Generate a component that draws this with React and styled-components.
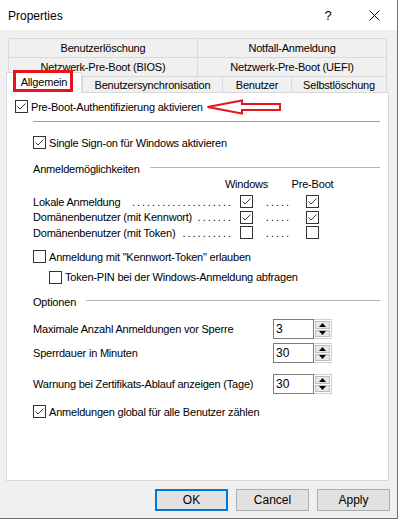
import styled, { createGlobalStyle } from 'styled-components';

const GlobalStyle = createGlobalStyle`
  html, body {
    margin: 0;
    padding: 0;
    background: #ffffff;
  }
  body {
    font-family: "Liberation Sans", Arial, sans-serif;
    font-size: 11px;
    letter-spacing: -0.2px;
    color: #000000;
  }
  * {
    box-sizing: border-box;
  }
`;

const backTabs = [
  ['Benutzerlöschung', 'Notfall-Anmeldung'],
  ['Netzwerk-Pre-Boot (BIOS)', 'Netzwerk-Pre-Boot (UEFI)'],
];

const frontTabs = [
  { label: 'Allgemein', width: 76, selected: true },
  { label: 'Benutzersynchronisation', width: 140 },
  { label: 'Benutzer', width: 69 },
  { label: 'Selbstlöschung', width: 96 },
];

// dots: how many leader dots the row shows before the Windows column
const loginRows = [
  { label: 'Lokale Anmeldung', dots: 20, windows: true, preBoot: true },
  { label: 'Domänenbenutzer (mit Kennwort)', dots: 7, windows: true, preBoot: true },
  { label: 'Domänenbenutzer (mit Token)', dots: 10, windows: false, preBoot: false },
];

const spinRows = [
  { label: 'Maximale Anzahl Anmeldungen vor Sperre', value: '3', mt: 10 },
  { label: 'Sperrdauer in Minuten', value: '30', mt: 4 },
  { label: 'Warnung bei Zertifikats-Ablauf anzeigen (Tage)', value: '30', mt: 11 },
];

const CheckBox = ({ checked }) => (
  <Box>
    {checked && (
      <svg width="11" height="11" viewBox="0 0 11 11">
        <polyline points="1.5,5.5 4,8 9.5,2.5" fill="none" stroke="#3c3c3c" strokeWidth="1" />
      </svg>
    )}
  </Box>
);

const SpinControl = ({ value }) => (
  <SpinBox>
    <SpinField>{value}</SpinField>
    <Spinner>
      <SpinBtn>
        <svg width="7" height="4" viewBox="0 0 7 4">
          <polygon points="0,4 3.5,0 7,4" fill="#000" />
        </svg>
      </SpinBtn>
      <SpinBtn>
        <svg width="7" height="4" viewBox="0 0 7 4">
          <polygon points="0,0 7,0 3.5,4" fill="#000" />
        </svg>
      </SpinBtn>
    </Spinner>
  </SpinBox>
);

const App = () => {
  return (
    <>
      <GlobalStyle />
      <Window>
        <TitleBar>
          <TitleText>Properties</TitleText>
          <TitleButton>?</TitleButton>
          <TitleButton>
            <svg width="11" height="11" viewBox="0 0 11 11">
              <path d="M0.5 0.5 L10.5 10.5 M10.5 0.5 L0.5 10.5" stroke="#000" strokeWidth="1" />
            </svg>
          </TitleButton>
        </TitleBar>

        <Body>
          {backTabs.map((row) => (
            <TabRow key={row[0]}>
              {row.map((label) => (
                <Tab key={label}>{label}</Tab>
              ))}
            </TabRow>
          ))}
          <FrontRow>
            {frontTabs.map((tab) => (
              <Tab key={tab.label} $w={tab.width} $selected={tab.selected}>
                {tab.label}
                {tab.selected && <Marker />}
              </Tab>
            ))}
          </FrontRow>

          <Panel>
            <CheckRow $mt={6}>
              <CheckBox checked />
              <Label>Pre-Boot-Authentifizierung aktivieren</Label>
              <Arrow width="76" height="16" viewBox="0 0 76 16">
                <polygon
                  points="1.5,8 36,1.5 36,5 74,5 74,11 36,11 36,14.5"
                  fill="#ffffff"
                  stroke="#e8141c"
                  strokeWidth="2"
                  strokeLinejoin="miter"
                />
              </Arrow>
            </CheckRow>
            <Separator />

            <CheckRow $mt={13} $indent={18}>
              <CheckBox checked />
              <Label>Single Sign-on für Windows aktivieren</Label>
            </CheckRow>

            <GroupHeading $mt={11}>
              <span>Anmeldemöglichkeiten</span>
              <GroupLine />
            </GroupHeading>

            <MatrixRow $h={15}>
              <span />
              <ColHead>Windows</ColHead>
              <span />
              <ColHead>Pre-Boot</ColHead>
            </MatrixRow>
            <Matrix>
              {loginRows.map((row) => (
                <MatrixRow key={row.label} $h={15.5}>
                  <RowLabel>
                    <span>{row.label}</span>
                    <Leader>{'.'.repeat(row.dots)}</Leader>
                  </RowLabel>
                  <CheckBox checked={row.windows} />
                  <MidDots>.....</MidDots>
                  <CheckBox checked={row.preBoot} />
                </MatrixRow>
              ))}
            </Matrix>

            <CheckRow $mt={8.5} $indent={18}>
              <CheckBox />
              <Label>Anmeldung mit &quot;Kennwort-Token&quot; erlauben</Label>
            </CheckRow>
            <CheckRow $mt={5.5} $indent={34}>
              <CheckBox />
              <Label>Token-PIN bei der Windows-Anmeldung abfragen</Label>
            </CheckRow>

            <GroupHeading $mt={9.5}>
              <span>Optionen</span>
              <GroupLine />
            </GroupHeading>

            {spinRows.map((row) => (
              <SpinRow key={row.label} $mt={row.mt}>
                <SpinLabel>{row.label}</SpinLabel>
                <SpinControl value={row.value} />
              </SpinRow>
            ))}

            <CheckRow $mt={10} $indent={18}>
              <CheckBox checked />
              <Label>Anmeldungen global für alle Benutzer zählen</Label>
            </CheckRow>
          </Panel>

          <Footer>
            <DialogButton $default>OK</DialogButton>
            <DialogButton>Cancel</DialogButton>
            <DialogButton>Apply</DialogButton>
          </Footer>
        </Body>
      </Window>
    </>
  );
};

const Window = styled.div`
  width: 398px;
  height: 519px;
  display: flex;
  flex-direction: column;
  border-right: 1px solid #707070;
  border-bottom: 1px solid #707070;
  background-color: #f0f0f0;
`;

const TitleBar = styled.div`
  display: flex;
  align-items: center;
  height: 30px;
  padding-left: 8px;
  background-color: #ffffff;
  font-size: 12px;
  letter-spacing: 0;
`;

const TitleText = styled.div`
  flex: 1;
  padding-top: 1px;
`;

const TitleButton = styled.div`
  display: flex;
  justify-content: center;
  align-items: center;
  width: 46px;
  height: 30px;
  font-size: 13px;
`;

const Body = styled.div`
  flex: 1;
  display: flex;
  flex-direction: column;
  padding: 8px 8px 0 6px;
`;

const TabRow = styled.div`
  display: flex;
  height: 19px;
  margin: 0 2px;
`;

const FrontRow = styled.div`
  display: flex;
  align-items: flex-start;
  height: 21px;
  margin: -4px 2px 0 0;
  position: relative;
  z-index: 2;
`;

const Tab = styled.div`
  flex: ${(props) => (props.$w ? `0 0 ${props.$w}px` : '1 1 0')};
  display: flex;
  justify-content: center;
  align-items: center;
  height: ${(props) => (props.$selected ? '21px' : props.$w ? '16px' : '19px')};
  margin-top: ${(props) => (props.$w && !props.$selected ? '4px' : '0')};
  padding-bottom: ${(props) => (props.$selected ? '2px' : '0')};
  border: 1px solid #d9d9d9;
  border-bottom: none;
  border-right: ${(props) => (props.$selected ? '1px solid #d9d9d9' : 'none')};
  background-color: ${(props) => (props.$selected ? '#ffffff' : '#f0f0f0')};
  white-space: nowrap;
  position: relative;

  &:last-child {
    border-right: 1px solid #d9d9d9;
  }
`;

const Marker = styled.div`
  position: absolute;
  left: 6px;
  top: -3px;
  width: 60px;
  height: 22px;
  border: 3px solid #e5141d;
`;

const Panel = styled.div`
  flex: 1;
  display: flex;
  flex-direction: column;
  margin-top: -1px;
  padding: 0 8px;
  background-color: #ffffff;
  border: 1px solid #d9d9d9;
  position: relative;
  z-index: 1;
`;

const CheckRow = styled.div`
  display: flex;
  align-items: center;
  height: 15px;
  margin-top: ${(props) => props.$mt || 0}px;
  padding-left: ${(props) => props.$indent || 0}px;
  white-space: nowrap;
`;

const Box = styled.span`
  display: flex;
  justify-content: center;
  align-items: center;
  flex-shrink: 0;
  width: 13px;
  height: 13px;
  border: 1px solid #333333;
  background-color: #ffffff;
`;

const Label = styled.span`
  margin-left: 3px;
`;

const Arrow = styled.svg`
  flex-shrink: 0;
  margin-left: 3px;
`;

const Separator = styled.div`
  height: 1px;
  margin: 7px 0 0 18px;
  background-color: #a0a0a0;
`;

const GroupHeading = styled.div`
  display: flex;
  align-items: center;
  height: 15px;
  margin-top: ${(props) => props.$mt || 0}px;
  padding-left: 18px;
  white-space: nowrap;
`;

const GroupLine = styled.div`
  flex: 1;
  height: 1px;
  margin: 0 0 3px 10px;
  background-color: #b4b4b4;
`;

const Matrix = styled.div`
  display: flex;
  flex-direction: column;
  margin-top: 3px;
`;

const MatrixRow = styled.div`
  display: grid;
  grid-template-columns: 207px 13px 53px 13px;
  align-items: center;
  height: ${(props) => props.$h}px;
  padding-left: 18px;
`;

const ColHead = styled.span`
  justify-self: center;
  white-space: nowrap;
`;

const RowLabel = styled.div`
  display: flex;
  align-items: center;
  white-space: nowrap;
`;

const Leader = styled.span`
  margin: 0 7px 0 auto;
  letter-spacing: 2px;
`;

const MidDots = styled.span`
  text-align: center;
  letter-spacing: 2px;
  white-space: nowrap;
  padding-right: 2px;
`;

const SpinRow = styled.div`
  display: flex;
  align-items: center;
  height: 20px;
  margin-top: ${(props) => props.$mt}px;
  padding-left: 18px;
  white-space: nowrap;
`;

const SpinLabel = styled.span`
  width: 240px;
`;

const SpinBox = styled.div`
  display: flex;
  width: 59px;
  height: 20px;
`;

const SpinField = styled.div`
  flex: 1;
  display: flex;
  align-items: center;
  padding-left: 2px;
  border: 1px solid #7a7a7a;
  background-color: #ffffff;
  font-size: 12px;
  letter-spacing: 0;
`;

const Spinner = styled.div`
  display: flex;
  flex-direction: column;
  width: 18px;
  padding: 1px;
  border: 1px solid #cfcfcf;
  border-left: none;
  background-color: #ffffff;
`;

const SpinBtn = styled.div`
  flex: 1;
  display: flex;
  justify-content: center;
  align-items: center;
  background-color: #e6e6e6;
  border: 1px solid #bdbdbd;

  & + & {
    margin-top: 1px;
  }
`;

const Footer = styled.div`
  display: flex;
  justify-content: flex-end;
  gap: 8px;
  padding: 8px 0 7px;
  margin-right: -1px;
`;

const DialogButton = styled.button`
  width: 73px;
  height: 22px;
  padding: 0;
  font-family: inherit;
  font-size: 12px;
  letter-spacing: 0;
  color: #000000;
  background-color: #e1e1e1;
  border: ${(props) => (props.$default ? '2px solid #0078d7' : '1px solid #adadad')};
`;

export default App;
